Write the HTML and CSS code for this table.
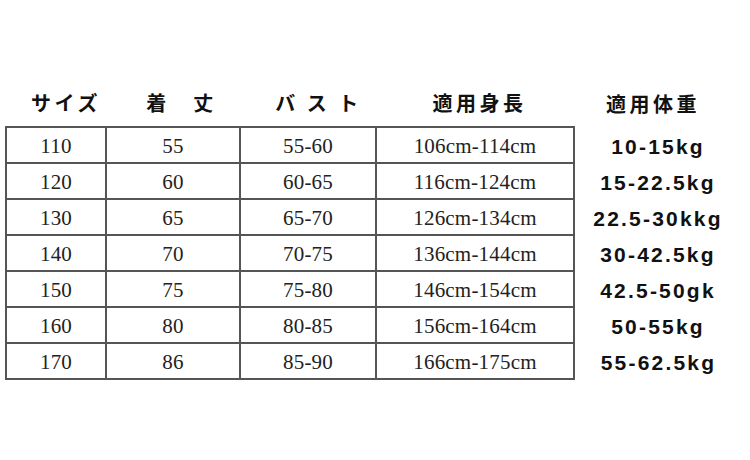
FILE: index.html
```html
<!DOCTYPE html>
<html lang="ja">
<head>
<meta charset="utf-8">
<title>サイズ表</title>
<link rel="stylesheet" href="styles.css">
</head>
<body>
<div class="page">
  <table class="size-table">
    <colgroup>
      <col class="w-size"><col class="w-length"><col class="w-bust"><col class="w-height"><col class="w-weight">
    </colgroup>
    <thead>
      <tr class="head-row">
        <th class="h h1">サイズ</th>
        <th class="h h2">着　丈</th>
        <th class="h h3">バ ス ト</th>
        <th class="h h4">適用身長</th>
        <th class="h h5">適用体重</th>
      </tr>
    </thead>
    <tbody>
      <tr><td class="c">110</td><td class="c">55</td><td class="c">55-60</td><td class="c">106cm-114cm</td><td class="wt">10-15kg</td></tr>
      <tr><td class="c">120</td><td class="c">60</td><td class="c">60-65</td><td class="c">116cm-124cm</td><td class="wt">15-22.5kg</td></tr>
      <tr><td class="c">130</td><td class="c">65</td><td class="c">65-70</td><td class="c">126cm-134cm</td><td class="wt">22.5-30kkg</td></tr>
      <tr><td class="c">140</td><td class="c">70</td><td class="c">70-75</td><td class="c">136cm-144cm</td><td class="wt">30-42.5kg</td></tr>
      <tr><td class="c">150</td><td class="c">75</td><td class="c">75-80</td><td class="c">146cm-154cm</td><td class="wt">42.5-50gk</td></tr>
      <tr><td class="c">160</td><td class="c">80</td><td class="c">80-85</td><td class="c">156cm-164cm</td><td class="wt">50-55kg</td></tr>
      <tr><td class="c">170</td><td class="c">86</td><td class="c">85-90</td><td class="c">166cm-175cm</td><td class="wt">55-62.5kg</td></tr>
    </tbody>
  </table>
</div>
</body>
</html>
```
FILE: styles.css
```css
html, body {
  margin: 0;
  padding: 0;
  background: #ffffff;
}
.page {
  width: 750px;
  height: 460px;
  padding: 90px 0 0 5px;
  box-sizing: border-box;
}
.size-table {
  border-collapse: collapse;
  table-layout: fixed;
  width: 734px;
}
.w-size { width: 100px; }
.w-length { width: 134px; }
.w-bust { width: 136px; }
.w-height { width: 198px; }
.w-weight { width: 166px; }

.head-row { height: 36px; }
.h {
  font-family: "Noto Sans CJK JP", "Noto Sans CJK SC", sans-serif;
  font-weight: 700;
  font-size: 20px;
  line-height: 22px;
  letter-spacing: 3.5px;
  color: #111;
  padding: 2px 0 12px 0;
  text-align: center;
  white-space: nowrap;
}
.h1 { padding-left: 20px; }
.h2 { padding-left: 17px; }
.h3 { padding-left: 21px; }
.h4 { padding-left: 9px; }
.h5 { padding-right: 7px; }

tbody tr { height: 36px; }
.c {
  border: 2px solid #555;
  font-family: "Liberation Serif", "Times New Roman", serif;
  font-size: 21px;
  line-height: 24px;
  letter-spacing: 0.2px;
  color: #222;
  text-align: center;
  padding: 2px 0 0 0;
}
.wt {
  font-family: "Liberation Sans", Arial, sans-serif;
  font-weight: 700;
  font-size: 21px;
  line-height: 24px;
  letter-spacing: 2.2px;
  color: #111;
  text-align: center;
  padding: 3px 0 0 2px;
  white-space: nowrap;
}
```
